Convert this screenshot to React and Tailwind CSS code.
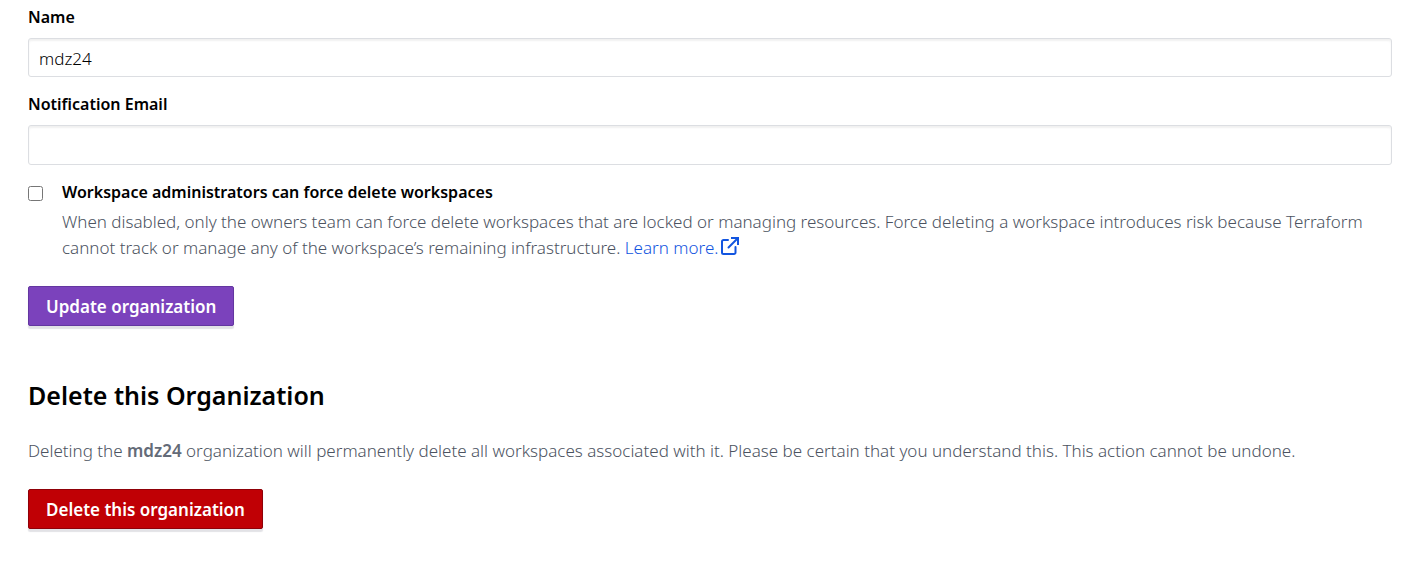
const inputClass =
  "block w-full rounded-[3px] border border-[#dcdee2] bg-white px-2.5 pt-0.5 font-light shadow-[inset_0_2px_2px_rgba(0,0,0,0.06)]";
const labelClass = "block text-base leading-[22px] font-semibold";
const textClass = "leading-[26px] font-light text-[#4c5361]";
const buttonClass =
  "block h-10 rounded-[2px] border px-[17px] pt-0.5 font-semibold text-white shadow-[0_3px_1px_rgba(50,50,80,0.14)]";

function ExternalLinkIcon() {
  return (
    <svg
      viewBox="0 0 20 20"
      className="ml-0.5 inline size-5 align-[-2px]"
      fill="none"
      stroke="currentColor"
      strokeWidth="2"
      strokeLinecap="round"
      strokeLinejoin="round"
      aria-hidden="true"
    >
      <path d="M8 4H3.5A1.5 1.5 0 0 0 2 5.5V16.5A1.5 1.5 0 0 0 3.5 18H14A1.5 1.5 0 0 0 15.5 16.5V11" />
      <path d="M12 2H18V8" strokeLinecap="square" strokeLinejoin="miter" />
      <path d="M17.5 2.5L8.5 11.5" />
    </svg>
  );
}

export default function App() {
  return (
    <main className="bg-white pt-1.5 pr-[9px] pb-10 pl-7 font-['Noto_Sans','Open_Sans',sans-serif] text-[17px] text-black">
      <form onSubmit={(e) => e.preventDefault()}>
        <label htmlFor="name" className={labelClass}>Name</label>
        <input id="name" defaultValue="mdz24" className={`${inputClass} mt-2.5 h-[39px]`} />
        <label htmlFor="email" className={`${labelClass} mt-4`}>Notification Email</label>
        <input id="email" type="email" className={`${inputClass} mt-2.5 h-10`} />
        <div className="mt-4 flex items-start gap-[19px]">
          <input id="force" type="checkbox" className="mt-[5px] size-[15px] shrink-0" />
          <div>
            <label htmlFor="force" className={labelClass}>Workspace administrators can force delete workspaces</label>
            <p className={`${textClass} mt-1.5`}>
              When disabled, only the owners team can force delete workspaces that are locked or managing
              resources. Force deleting a workspace introduces risk because Terraform cannot track or manage
              any of the workspace’s remaining infrastructure.{" "}
              <a href="#learn-more" className="text-[#1255e0]">Learn more.<ExternalLinkIcon /></a>
            </p>
          </div>
        </div>
        <button type="submit" className={`${buttonClass} mt-[25px] border-[#6336a0] bg-[#7b42bc]`}>Update organization</button>
      </form>
      <section className="mt-[50px]">
        <h2 className="text-[25px] leading-[38px] font-semibold">Delete this Organization</h2>
        <p className={`${textClass} mt-6`}>
          Deleting the <strong className="font-semibold text-[#646b78]">mdz24</strong> organization will permanently delete all workspaces
          associated with it. Please be certain that you understand this. This action cannot be undone.
        </p>
        <button type="button" className={`${buttonClass} mt-[25px] border-[#8f0008] bg-[#c00005]`}>Delete this organization</button>
      </section>
    </main>
  );
}
